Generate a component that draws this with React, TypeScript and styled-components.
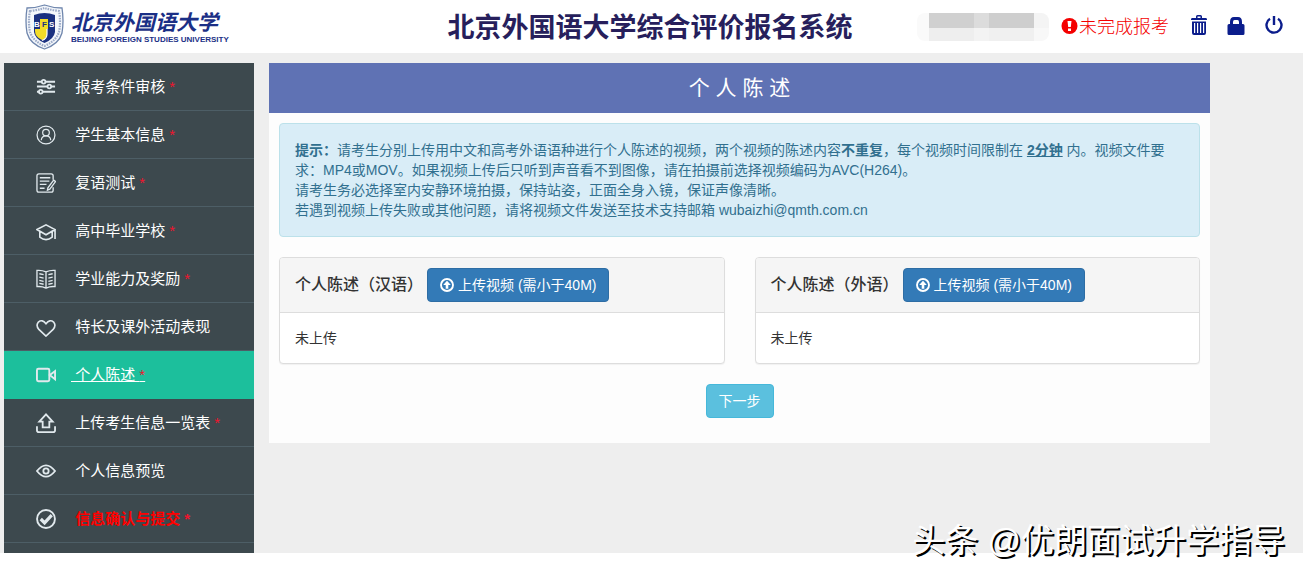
import React from "react";
import styled, { createGlobalStyle } from "styled-components";

const GlobalStyle = createGlobalStyle`
  * { box-sizing: border-box; }
  body {
    margin: 0;
    background: #fff;
    color: #333;
    font-family: "Liberation Sans", "Noto Sans CJK SC", sans-serif;
    font-size: 14px;
    line-height: 20px;
  }
`;

const Header = styled.header`
  display: grid;
  grid-template-columns: 1fr auto 1fr;
  align-items: center;
  height: 53px;
  padding: 0 19px 0 16px;
  background: #fff;
`;

const Brand = styled.a`
  display: flex;
  align-items: center;
  gap: 7px;
  padding-left: 9px;
  color: #1b2f86;
  text-decoration: none;
`;

const BrandText = styled.span`
  display: flex;
  flex-direction: column;
  white-space: nowrap;
`;

const BrandName = styled.span`
  font-size: 21px;
  line-height: 26px;
  font-weight: 700;
  font-style: italic;
`;

const BrandLatin = styled.span`
  font-size: 8px;
  line-height: 8px;
  font-weight: 700;
`;

const SystemTitle = styled.h1`
  margin: 0;
  padding-top: 2px;
  color: #271f5c;
  font-size: 27px;
  line-height: 40px;
  font-weight: 700;
  white-space: nowrap;
`;

const Tools = styled.div`
  display: flex;
  align-items: center;
  justify-content: flex-end;
`;

const MaskedName = styled.div`
  display: grid;
  grid-template-columns: 12px 45px 15px 45px 15px;
  grid-template-rows: 15px 13px;
  margin-right: 12px;
  overflow: hidden;
  border-radius: 8px;
`;

const MaskTile = styled.span<{ $tone: string }>`
  background: ${(p) => p.$tone};
`;

const Status = styled.span`
  display: flex;
  align-items: center;
  gap: 1px;
  margin-right: 21px;
  color: #f40000;
  font-size: 18px;
  line-height: 26px;
  font-weight: 300;
  white-space: nowrap;
`;

const ToolButtons = styled.div`
  display: flex;
  gap: 18px;
  padding-bottom: 4px;
`;

const ToolButton = styled.button`
  display: flex;
  padding: 0;
  border: 0;
  background: none;
  color: #0b1d8c;
  cursor: pointer;
`;

const Main = styled.div`
  display: flex;
  align-items: flex-start;
  padding: 10px 93px 0 4px;
  background: #eee;
`;

const Sidebar = styled.nav`
  flex: 0 0 250px;
  margin-right: 15px;
  padding-bottom: 10px;
  background: #3d494e;
`;

const MenuList = styled.ul`
  margin: 0;
  padding: 0;
  list-style: none;
`;

const MenuLink = styled.a<{ $active?: boolean; $alert?: boolean }>`
  display: flex;
  align-items: center;
  gap: 15px;
  height: 48px;
  padding-left: 32px;
  border-bottom: 1px solid ${(p) => (p.$active ? "#1cbf9c" : "#4d5e66")};
  background: ${(p) => (p.$active ? "#1cbf9c" : "transparent")};
  color: ${(p) => (p.$alert ? "#f00" : "#fff")};
  font-size: 15px;
  font-weight: ${(p) => (p.$alert ? 700 : 400)};
  text-decoration: none;
`;

const MenuLabel = styled.span<{ $active?: boolean }>`
  white-space: pre;
  text-decoration: ${(p) => (p.$active ? "underline" : "none")};
`;

const Required = styled.span`
  color: #f0142d;
`;

const Content = styled.main`
  flex: 1;
  min-width: 0;
  background: #fdfdfd;
`;

const ContentTitle = styled.h2`
  margin: 0;
  background: #5f72b4;
  color: #fff;
  font-size: 21px;
  line-height: 50px;
  font-weight: 400;
  text-align: center;
`;

const ContentBody = styled.div`
  display: flex;
  flex-direction: column;
  gap: 20px;
  padding: 10px 10px 25px;
`;

const Notice = styled.div`
  padding: 16px 15px;
  border: 1px solid #bce1ea;
  border-radius: 4px;
  background: #d9edf7;
  color: #31708f;

  p { margin: 0; }
`;

const Cards = styled.div`
  display: grid;
  grid-template-columns: 1fr 1fr;
  gap: 30px;
`;

const Card = styled.section`
  overflow: hidden;
  border: 1px solid #ddd;
  border-radius: 4px;
  background: #fff;
  box-shadow: 0 1px 1px rgba(0, 0, 0, 0.05);
`;

const CardHead = styled.div`
  display: flex;
  align-items: center;
  gap: 4px;
  padding: 10px 15px;
  border-bottom: 1px solid #ddd;
  background: #f5f5f5;
`;

const CardTitle = styled.h3`
  margin: 0;
  font-size: 16px;
  line-height: 20px;
  font-weight: 500;
`;

const CardBody = styled.div`
  padding: 15px;
`;

const Button = styled.button<{ $tone: "primary" | "info" }>`
  display: inline-flex;
  align-items: center;
  gap: 4px;
  height: 34px;
  padding: 0 12px;
  border: 1px solid ${(p) => (p.$tone === "primary" ? "#2e6da4" : "#46b8da")};
  border-radius: 4px;
  background: ${(p) => (p.$tone === "primary" ? "#337ab7" : "#5bc0de")};
  color: #fff;
  font: inherit;
  white-space: nowrap;
  cursor: pointer;
`;

const Actions = styled.div`
  display: flex;
  justify-content: center;
`;

const Watermark = styled.div`
  position: absolute;
  right: 18px;
  top: 519px;
  color: #fff;
  font-size: 33px;
  line-height: 44px;
  text-shadow: 2px 2px 0 #000;
  white-space: nowrap;
`;

const Crest = () => (
  <svg width="39" height="46" viewBox="0 0 39 46" aria-hidden="true">
    <path d="M2 4Q11 4 19.500 1Q28 4 37 4Q39 17 37 29Q34 40 19.500 45Q5 40 2 29Q0 17 2 4Z" fill="#f4f7fb" stroke="#6f86ad" strokeWidth="1.300" />
    <path d="M5 7Q13 6 19.500 4Q26 6 34 7Q36 18 34 28Q31 37 19.500 42Q8 37 5 28Q3 18 5 7Z" fill="none" stroke="#9dabc8" strokeWidth="2.200" strokeDasharray="1.600 1" />
    <path d="M9 11Q19.500 7 30 11V28Q29 35 19.500 39Q10 35 9 28Z" fill="#1b3180" />
    <path d="M10 25H15V15H23V25H22V31Q20 36 17 36Q10 33 10 27Z" fill="#f3dc28" />
    <path d="M22 25V30Q22 35 17 36.500" fill="none" stroke="#fff" strokeWidth="1.200" />
    <text x="9" y="23" fontSize="8" fontWeight="700" fill="#fff" fontFamily="Liberation Sans, sans-serif">B</text>
    <text x="17" y="23" fontSize="8" fontWeight="700" fill="#1b3180" fontFamily="Liberation Sans, sans-serif">F</text>
    <text x="24" y="23" fontSize="8" fontWeight="700" fill="#fff" fontFamily="Liberation Sans, sans-serif">S</text>
  </svg>
);

const ExclamationIcon = () => (
  <svg width="17" height="18" viewBox="0 0 17 18" aria-hidden="true">
    <circle cx="8.500" cy="8" r="8" fill="#f40000" />
    <path d="M6.500 3H10.500L9.800 9H7.200Z M7 10.500H10V13H7Z" fill="#fff" />
  </svg>
);

const TrashIcon = () => (
  <svg width="18" height="20" viewBox="0 0 18 20" aria-hidden="true">
    <path fillRule="evenodd" fill="currentColor" d="M6 3V1.500Q6 0 7.500 0H10.500Q12 0 12 1.500V3H16Q17 3 17 4.500V5H1V4.500Q1 3 2 3ZM7.500 3H10.500V1.500H7.500ZM2 6.500H16V18Q16 20 14 20H4Q2 20 2 18ZM4 8V18H5.200V8ZM7 8V18H8.200V8ZM10 8V18H11.200V8ZM13 8V18H14.200V8Z" />
  </svg>
);

const LockIcon = () => (
  <svg width="20" height="20" viewBox="0 0 20 20" aria-hidden="true">
    <path fillRule="evenodd" fill="currentColor" d="M4 9V7Q4 2 8 2H12Q16 2 16 7V9H17Q18.500 9 18.500 10.500V18.500Q18.500 20 17 20H3Q1.500 20 1.500 18.500V10.500Q1.500 9 3 9ZM7 9H13V7Q13 5 11.500 5H8.500Q7 5 7 7Z" />
  </svg>
);

const PowerIcon = () => (
  <svg width="20" height="20" viewBox="0 0 20 20" fill="none" stroke="currentColor" strokeWidth="2.400" aria-hidden="true">
    <path d="M6 3.800A7.500 7.500 0 1 0 14 3.800M10 1V10" />
  </svg>
);

const UploadIcon = () => (
  <svg width="14" height="14" viewBox="0 0 14 14" aria-hidden="true">
    <circle cx="7" cy="7" r="6" fill="none" stroke="currentColor" strokeWidth="1.900" />
    <path d="M7 2.800L10.800 7H8.300V10.800H5.700V7H3.200Z" fill="currentColor" />
  </svg>
);

const menuIcons: Record<string, React.ReactNode> = {
  sliders: (
    <g strokeWidth="1.900">
      <path d="M1 5H6M10 5H20M1 10H12M16 10H20M1 15.500H3M7 15.500H20" />
      <circle cx="8" cy="5" r="1.900" />
      <circle cx="14" cy="10" r="1.900" />
      <circle cx="5" cy="15.500" r="1.900" />
    </g>
  ),
  user: (
    <g strokeWidth="1.300">
      <circle cx="10.500" cy="10.500" r="9.400" />
      <circle cx="10.500" cy="8" r="3.500" />
      <path d="M5.500 16Q6 11.500 10.500 11.500Q15 11.500 15.500 16" />
    </g>
  ),
  form: (
    <g strokeWidth="1.400">
      <path d="M18 7V3Q18 1 16 1H3Q1 1 1 3V18Q1 20 3 20H16Q18 20 18 18V15" />
      <path d="M4 5H15M4 8.500H14M4 12H11M4 16H9M18.500 7.500L20.500 9L14.500 17L12 18L12.500 15.500Z" />
    </g>
  ),
  school: (
    <g strokeWidth="1.700">
      <path d="M1 9L10.500 4L20 9L10.500 14.500ZM4 11V17Q10.500 22 17 17V11M20 9V19" />
    </g>
  ),
  book: (
    <g strokeWidth="1.400">
      <path d="M10.500 3Q6 1 1 1.500V18.500Q6 18 10.500 20Q15 18 20 18.500V1.500Q15 1 10.500 3V20" />
      <path d="M3.500 5L8 6M3.500 8.500L8 9.500M3.500 12L8 13M3.500 15L8 16M13 6L17.500 5M13 9.500L17.500 8.500M13 13L17.500 12M13 16L17.500 15" />
    </g>
  ),
  heart: <path strokeWidth="1.700" d="M10.500 20L3 13Q-.5 9 2.500 5.300Q6.500 2 10.500 7Q14.500 2 18.500 5.300Q21.500 9 18 13Z" />,
  video: (
    <g strokeWidth="2">
      <rect x="1" y="4" width="13" height="13" rx="1.500" />
      <path d="M14.500 10.500L20 6.500V15Z" />
    </g>
  ),
  upload: (
    <g strokeWidth="1.900">
      <path d="M7 15V9H3.500L10.500 1.500L17.500 9H14V15Z" />
      <path d="M1 14V18Q1 20 3 20H18Q20 20 20 18V14" />
    </g>
  ),
  eye: (
    <g strokeWidth="1.900">
      <path d="M1 10.500Q10.500-1.500 20 10.500Q10.500 22.500 1 10.500Z" />
      <circle cx="10.500" cy="10.500" r="2.800" />
    </g>
  ),
  check: (
    <>
      <circle cx="10.500" cy="10.500" r="9.400" strokeWidth="2" />
      <path d="M5 10.500L9 14.500L16.500 6.500" strokeWidth="3.400" />
    </>
  ),
};

type MenuEntry = { icon: string; label: string; required?: boolean; active?: boolean; alert?: boolean };

const menu: MenuEntry[] = [
  { icon: "sliders", label: "报考条件审核", required: true },
  { icon: "user", label: "学生基本信息", required: true },
  { icon: "form", label: "复语测试", required: true },
  { icon: "school", label: "高中毕业学校", required: true },
  { icon: "book", label: "学业能力及奖励", required: true },
  { icon: "heart", label: "特长及课外活动表现" },
  { icon: "video", label: "个人陈述", required: true, active: true },
  { icon: "upload", label: "上传考生信息一览表", required: true },
  { icon: "eye", label: "个人信息预览" },
  { icon: "check", label: "信息确认与提交", required: true, alert: true },
];

const maskTones = [
  "#fafafa", "#d0d0d0", "#dcdcdc", "#cecece", "#f4f4f4",
  "#fafafa", "#eeeeee", "#f3f3f3", "#f0f0f0", "#f8f8f8",
];

const MenuIcon = ({ name }: { name: string }) => (
  <svg width="20" height="20" viewBox="0 0 21 21" fill="none" stroke="#e1e9ed" aria-hidden="true">
    {menuIcons[name]}
  </svg>
);

const UploadCard = ({ title }: { title: string }) => (
  <Card>
    <CardHead>
      <CardTitle>{title}</CardTitle>
      <Button type="button" $tone="primary">
        <UploadIcon />
        上传视频 (需小于40M)
      </Button>
    </CardHead>
    <CardBody>未上传</CardBody>
  </Card>
);

export default function App() {
  return (
    <>
      <GlobalStyle />
      <Header>
        <Brand href="#">
          <Crest />
          <BrandText>
            <BrandName>北京外国语大学</BrandName>
            <BrandLatin>BEIJING FOREIGN STUDIES UNIVERSITY</BrandLatin>
          </BrandText>
        </Brand>
        <SystemTitle>北京外国语大学综合评价报名系统</SystemTitle>
        <Tools>
          <MaskedName aria-hidden="true">
            {maskTones.map((tone, i) => (
              <MaskTile key={i} $tone={tone} />
            ))}
          </MaskedName>
          <Status>
            <ExclamationIcon />
            未完成报考
          </Status>
          <ToolButtons>
            <ToolButton type="button" aria-label="删除"><TrashIcon /></ToolButton>
            <ToolButton type="button" aria-label="修改密码"><LockIcon /></ToolButton>
            <ToolButton type="button" aria-label="退出"><PowerIcon /></ToolButton>
          </ToolButtons>
        </Tools>
      </Header>
      <Main>
        <Sidebar>
          <MenuList>
            {menu.map((item) => (
              <li key={item.label}>
                <MenuLink href="#" $active={item.active} $alert={item.alert}>
                  <MenuIcon name={item.icon} />
                  <MenuLabel $active={item.active}>
                    {" " + item.label + " "}
                    {item.required && <Required>*</Required>}
                  </MenuLabel>
                </MenuLink>
              </li>
            ))}
          </MenuList>
        </Sidebar>
        <Content>
          <ContentTitle>个 人 陈 述</ContentTitle>
          <ContentBody>
            <Notice>
              <p>
                <b>提示：</b>请考生分别上传用中文和高考外语语种进行个人陈述的视频，两个视频的陈述内容<b>不重复</b>，每个视频时间限制在 <b><u>2分钟</u></b> 内。视频文件要<wbr />求：MP4或MOV。如果视频上传后只听到声音看不到图像，请在拍摄前选择视频编码为AVC(H264)。
              </p>
              <p>请考生务必选择室内安静环境拍摄，保持站姿，正面全身入镜，保证声像清晰。</p>
              <p>若遇到视频上传失败或其他问题，请将视频文件发送至技术支持邮箱 wubaizhi@qmth.com.cn</p>
            </Notice>
            <Cards>
              <UploadCard title="个人陈述（汉语）" />
              <UploadCard title="个人陈述（外语）" />
            </Cards>
            <Actions>
              <Button type="button" $tone="info">下一步</Button>
            </Actions>
          </ContentBody>
        </Content>
      </Main>
      <Watermark>头条 @优朗面试升学指导</Watermark>
    </>
  );
}
